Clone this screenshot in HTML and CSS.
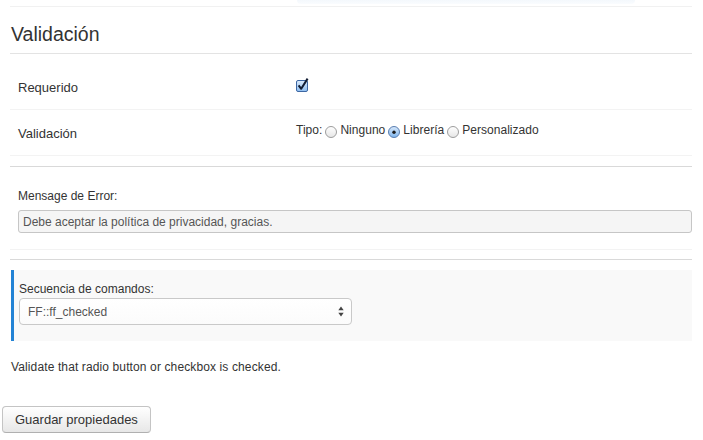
FILE: index.html
```html
<!DOCTYPE html>
<html lang="es">
<head>
<meta charset="utf-8">
<title>Validación</title>
<link rel="stylesheet" href="styles.css">
</head>
<body>
<div class="page">
  <div class="prev"><div class="prev-glow"></div></div>
  <h3 class="title">Validación</h3>

  <div class="row row-req">
    <div class="row-label">Requerido</div>
    <div class="row-control">
      <svg class="chk" width="15" height="15" viewBox="0 0 15 15" aria-hidden="true">
        <defs>
          <linearGradient id="cg" x1="0" y1="0" x2="0" y2="1">
            <stop offset="0" stop-color="#dcebfb"/>
            <stop offset="1" stop-color="#8dbdf0"/>
          </linearGradient>
        </defs>
        <rect x="1.5" y="3.5" width="11" height="11" rx="1.5" fill="url(#cg)" stroke="#3d67a3"/>
        <path d="M3.6 8.4 L6.2 11.8 L12.6 1.6" fill="none" stroke="#111c33" stroke-width="2" stroke-linejoin="round"/>
      </svg>
    </div>
  </div>

  <div class="row row-val">
    <div class="row-label lbl-val">Validación</div>
    <div class="row-control radios">Tipo:<svg class="radio" width="12" height="12" viewBox="0 0 12 12" aria-hidden="true"><defs><linearGradient id="ru" x1="0" y1="0" x2="0" y2="1"><stop offset="0" stop-color="#ffffff"/><stop offset="1" stop-color="#e6e6e6"/></linearGradient></defs><circle cx="6" cy="6" r="5.5" fill="url(#ru)" stroke="#9d9d9d"/></svg>Ninguno<svg class="radio" width="12" height="12" viewBox="0 0 12 12" aria-hidden="true"><defs><linearGradient id="rc" x1="0" y1="0" x2="0" y2="1"><stop offset="0" stop-color="#d9e9fb"/><stop offset="1" stop-color="#7db4ec"/></linearGradient></defs><circle cx="6" cy="6" r="5.5" fill="url(#rc)" stroke="#5a7eb0"/><circle cx="6" cy="6.3" r="1.7" fill="#1b1b1b"/></svg>Librería<svg class="radio" width="12" height="12" viewBox="0 0 12 12" aria-hidden="true"><circle cx="6" cy="6" r="5.5" fill="url(#ru)" stroke="#9d9d9d"/></svg>Personalizado</div>
  </div>

  <hr class="sep sep-a">

  <div class="group">
    <div class="group-label">Mensage de Error:</div>
    <div class="text-input">Debe aceptar la política de privacidad, gracias.</div>
  </div>

  <hr class="sep sep-b">

  <div class="callout">
    <div class="callout-label">Secuencia de comandos:</div>
    <div class="select">
      <span>FF::ff_checked</span>
      <svg class="arrows" width="6" height="11" viewBox="0 0 6 11" aria-hidden="true">
        <path d="M0.3 4.3 L3 0.6 L5.7 4.3 Z" fill="#444"/>
        <path d="M0.3 6.7 L3 10.4 L5.7 6.7 Z" fill="#444"/>
      </svg>
    </div>
  </div>

  <p class="help">Validate that radio button or checkbox is checked.</p>

  <div class="btn-wrap">
    <button class="btn" type="button">Guardar propiedades</button>
  </div>
</div>
</body>
</html>
```

FILE: styles.css
```css
body {
  margin: 0;
  background: #fff;
  color: #333;
  font-family: "Liberation Sans", Arial, sans-serif;
}

.page {
  padding: 0 11px 0 10px;
}

.prev {
  height: 6px;
  border-bottom: 1px solid #f1f1f1;
}

.prev-glow {
  margin-left: 287px;
  width: 338px;
  height: 4px;
  background: linear-gradient(#f4f8fc, #fafcfe);
  border-radius: 0 0 4px 4px;
}

.title {
  margin: 0;
  padding: 16px 0 8px 1px;
  font-size: 19.5px;
  line-height: 22px;
  font-weight: normal;
  color: #333;
  border-bottom: 1px solid #e3e3e3;
}

.row {
  display: grid;
  grid-template-columns: 278px 1fr;
  padding-left: 8px;
  border-bottom: 1px solid #f3f3f3;
  font-size: 13px;
}

.row-label {
  line-height: 20px;
}

.row-req {
  padding-top: 24px;
  height: 31px;
}

.chk {
  display: block;
  margin-left: -1px;
  margin-top: -1px;
}

.row-val {
  padding-top: 11px;
  height: 34px;
}

.lbl-val {
  padding-top: 2.5px;
}

.radios {
  font-size: 12px;
  line-height: 18px;
  white-space: nowrap;
  letter-spacing: 0.03px;
}

.radio {
  margin: 0 3px;
  vertical-align: -4px;
}

.sep {
  height: 0;
  border: 0;
  border-top: 1px solid #d9d9d9;
  margin: 0;
}

.sep-a {
  margin-top: 10px;
}

.sep-b {
  margin-top: 9px;
}

.group {
  padding: 20px 0 16px 8px;
  border-bottom: 1px solid #f3f3f3;
  font-size: 12px;
}

.group-label {
  line-height: 18px;
  margin-bottom: 5px;
}

.text-input {
  height: 19px;
  padding: 2px 4px 0;
  line-height: 19px;
  border: 1px solid #c6c6c6;
  border-radius: 3px;
  background: #f5f5f5;
  color: #555;
}

.callout {
  margin: 10px 0 0 1px;
  padding: 10px 0 16px 5px;
  border-left: 3px solid #2383d5;
  background: #f9f9f9;
  font-size: 12px;
}

.callout-label {
  line-height: 18px;
}

.select {
  box-sizing: border-box;
  width: 333px;
  height: 27px;
  padding: 0 7px 0 8px;
  display: flex;
  align-items: center;
  justify-content: space-between;
  border: 1px solid #c9c9c9;
  border-radius: 4px;
  background: linear-gradient(#ffffff, #fbfbfb);
  color: #555;
}

.arrows {
  display: block;
}

.help {
  margin: 17px 0 0 1px;
  font-size: 12px;
  line-height: 18px;
  letter-spacing: 0.12px;
}

.btn-wrap {
  margin: 30px 0 0 -8px;
}

.btn {
  height: 27px;
  padding: 0 12px;
  font-family: "Liberation Sans", Arial, sans-serif;
  font-size: 13px;
  line-height: 25px;
  color: #333;
  border: 1px solid #c4c4c4;
  border-bottom-color: #b0b0b0;
  border-radius: 4px;
  background: linear-gradient(#ffffff, #e7e7e7);
}
```
